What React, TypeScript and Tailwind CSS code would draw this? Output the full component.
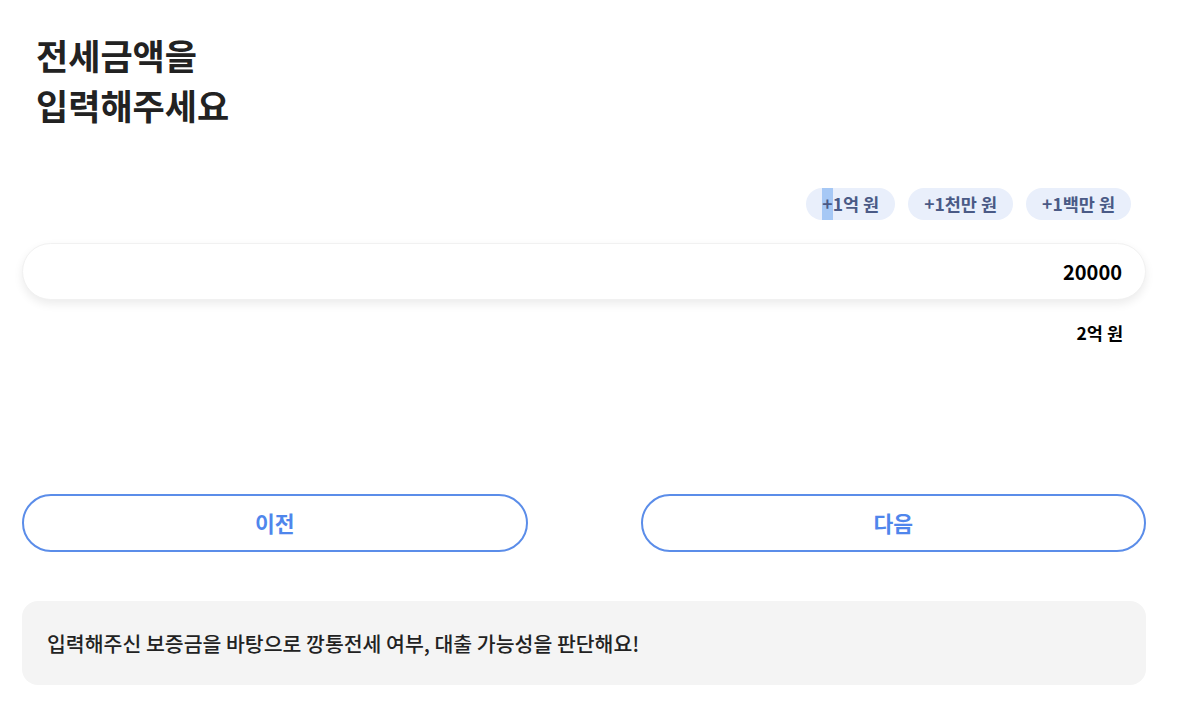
import { useState } from 'react';

const amountSteps = [
  { label: '+1억 원', value: 10000 },
  { label: '+1천만 원', value: 1000 },
  { label: '+1백만 원', value: 100 },
];

function toKorean(value: number) {
  const eok = Math.floor(value / 10000);
  const man = value % 10000;
  const parts = [];
  if (eok) parts.push(`${eok}억`);
  if (man) parts.push(`${man}만`);
  return `${parts.join(' ')} 원`;
}

export default function App() {
  const [amount, setAmount] = useState(20000);

  return (
    <div
      className="min-h-[727px] bg-white pl-[22px] pr-[54px] pt-[30px] text-[#222]"
      style={{ fontFamily: '"Noto Sans CJK KR", "Noto Sans", sans-serif' }}
    >
      {/* Title */}
      <h1 className="pl-[14px] text-[35px] font-bold leading-[50px] text-[#222]">
        전세금액을
        <br />
        입력해주세요
      </h1>

      {/* Quick add chips */}
      <div className="mt-[58px] flex justify-end gap-[13px] pr-[15px]">
        {amountSteps.map((step, i) => (
          <button
            key={step.label}
            onClick={() => setAmount(amount + step.value)}
            className="flex h-[32px] items-center rounded-full bg-[#e9effb] px-[16px] text-[17.5px] font-bold text-[#4a5a86]"
          >
            {i === 0 ? (
              <>
                <span className="flex h-[32px] items-center bg-[#a6c8f5]">+</span>
                {step.label.slice(1)}
              </>
            ) : (
              step.label
            )}
          </button>
        ))}
      </div>

      {/* Amount input */}
      <div className="mt-[23px] flex h-[57px] items-center justify-end rounded-full border border-[#f1f1f1] bg-white px-[23px] shadow-[0_4px_10px_rgba(0,0,0,0.08)]">
        <input
          value={amount}
          onChange={(e) => setAmount(Number(e.target.value.replace(/\D/g, '')) || 0)}
          className="w-full bg-transparent text-right text-[20px] font-bold text-black outline-none"
        />
      </div>
      <p className="mt-[20px] pr-[23px] text-right text-[17.5px] font-bold text-black">
        {toKorean(amount)}
      </p>

      {/* Navigation */}
      <div className="mt-[148px] flex gap-[113px]">
        <button className="h-[58px] flex-1 rounded-full border-2 border-[#5b8de9] text-[21.5px] font-bold text-[#4f86ec]">
          이전
        </button>
        <button className="h-[58px] flex-1 rounded-full border-2 border-[#5b8de9] text-[21.5px] font-bold text-[#4f86ec]">
          다음
        </button>
      </div>

      {/* Info */}
      <div className="mt-[49px] flex h-[84px] items-center rounded-[16px] bg-[#f4f4f4] px-[25px] text-[20.5px] font-medium text-[#222]">
        입력해주신 보증금을 바탕으로 깡통전세 여부, 대출 가능성을 판단해요!
      </div>
    </div>
  );
}
